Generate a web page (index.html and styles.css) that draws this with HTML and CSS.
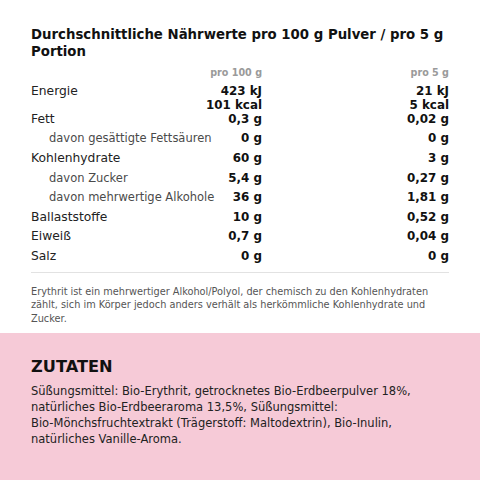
FILE: index.html
```html
<!DOCTYPE html>
<html lang="de">
<head>
<meta charset="utf-8">
<title>Nährwerte</title>
<link rel="stylesheet" href="styles.css">
</head>
<body>
<section class="nutrition">
  <h2 class="nutrition__title">Durchschnittliche Nährwerte pro 100 g Pulver / pro 5 g Portion</h2>
  <div class="table">
    <div class="row row--head">
      <span></span><span class="col-head">pro 100 g</span><span class="col-head">pro 5 g</span>
    </div>
    <div class="row row--nobottom">
      <span class="label">Energie</span>
      <span class="value">423 kJ<br>101 kcal</span>
      <span class="value">21 kJ<br>5 kcal</span>
    </div>
    <div class="row row--notop">
      <span class="label">Fett</span><span class="value">0,3 g</span><span class="value">0,02 g</span>
    </div>
    <div class="row">
      <span class="label label--sub">davon gesättigte Fettsäuren</span><span class="value">0 g</span><span class="value">0 g</span>
    </div>
    <div class="row">
      <span class="label">Kohlenhydrate</span><span class="value">60 g</span><span class="value">3 g</span>
    </div>
    <div class="row">
      <span class="label label--sub">davon Zucker</span><span class="value">5,4 g</span><span class="value">0,27 g</span>
    </div>
    <div class="row">
      <span class="label label--sub">davon mehrwertige Alkohole</span><span class="value">36 g</span><span class="value">1,81 g</span>
    </div>
    <div class="row">
      <span class="label">Ballaststoffe</span><span class="value">10 g</span><span class="value">0,52 g</span>
    </div>
    <div class="row">
      <span class="label">Eiweiß</span><span class="value">0,7 g</span><span class="value">0,04 g</span>
    </div>
    <div class="row">
      <span class="label">Salz</span><span class="value">0 g</span><span class="value">0 g</span>
    </div>
  </div>
  <p class="footnote">Erythrit ist ein mehrwertiger Alkohol/Polyol, der chemisch zu den Kohlenhydraten zählt, sich im Körper jedoch anders verhält als herkömmliche Kohlenhydrate und Zucker.</p>
</section>
<section class="ingredients">
  <h2 class="ingredients__title">ZUTATEN</h2>
  <p class="ingredients__text">Süßungsmittel: Bio-Erythrit, getrocknetes Bio-Erdbeerpulver 18%, natürliches Bio-Erdbeeraroma 13,5%, Süßungsmittel:<br>Bio-Mönchsfruchtextrakt (Trägerstoff: Maltodextrin), Bio-Inulin, natürliches Vanille-Aroma.</p>
</section>
</body>
</html>
```
FILE: styles.css
```css
html, body {
  margin: 0;
  padding: 0;
  background: #ffffff;
}
body {
  font-family: "DejaVu Sans", "Liberation Sans", sans-serif;
  color: #111;
}
.nutrition {
  padding: 26px 31px 8px;
}
.nutrition__title {
  margin: 0;
  font-size: 13.3px;
  line-height: 17px;
  font-weight: bold;
  color: #111;
}
.table {
  margin-top: 6px;
  border-bottom: 1px solid #e2e2e2;
  padding-bottom: 6px;
}
.row {
  display: grid;
  grid-template-columns: minmax(0, 1fr) 72px 187px;
  padding: 2.8px 0;
  line-height: 14px;
  align-items: start;
}
.row--head {
  padding: 0 0 1px;
}
.row--nobottom {
  padding-bottom: 0;
}
.row--notop {
  padding-top: 0;
}
.col-head {
  text-align: right;
  font-size: 9.6px;
  font-weight: bold;
  color: #9a9a9a;
}
.label {
  font-size: 12.3px;
  color: #222;
  white-space: nowrap;
}
.label--sub {
  font-size: 11.5px;
  padding-left: 18px;
  color: #4a4a4a;
}
.value {
  text-align: right;
  font-size: 11.9px;
  font-weight: bold;
  color: #111;
  white-space: nowrap;
}
.footnote {
  margin: 12px 0 0;
  font-size: 9.75px;
  line-height: 13.5px;
  color: #555;
}
.ingredients {
  background: #f6cad7;
  padding: 24px 31px 40px;
}
.ingredients__title {
  margin: 0;
  font-size: 16.2px;
  line-height: 20px;
  font-weight: bold;
  color: #111;
}
.ingredients__text {
  margin: 6px 0 0;
  font-size: 11.5px;
  line-height: 16px;
  color: #222;
}
```
